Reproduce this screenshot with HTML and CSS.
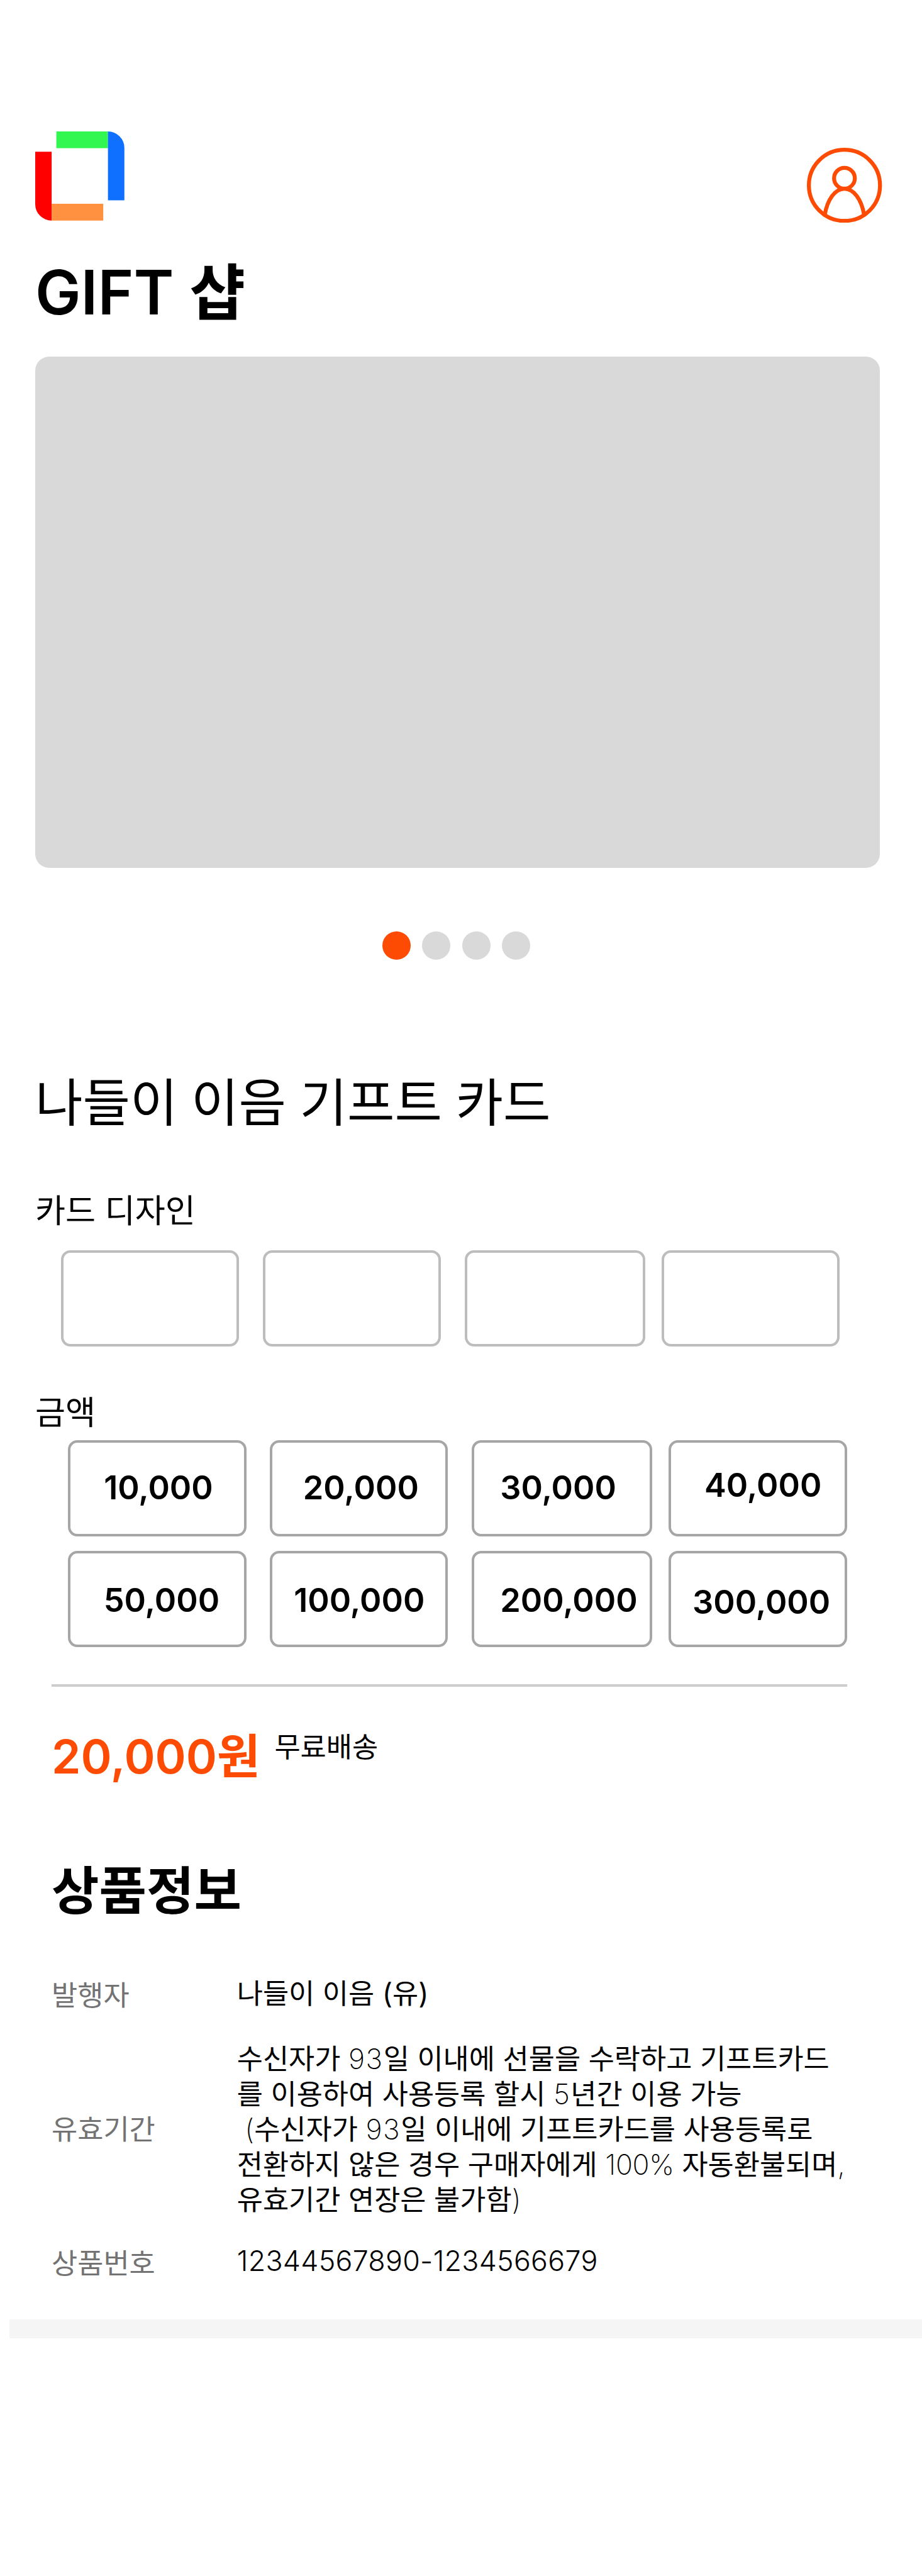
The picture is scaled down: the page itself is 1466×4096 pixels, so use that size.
FILE: index.html
```html
<!DOCTYPE html>
<html lang="ko">
<head>
<meta charset="utf-8">
<title>GIFT 샵</title>
<link rel="stylesheet" href="styles.css">
</head>
<body>
<main class="page">
  <header class="topbar">
    <svg class="logo" viewBox="0 0 152 152" aria-hidden="true">
      <rect x="36" y="0" width="88" height="28.5" fill="#31f750"/>
      <path d="M124 0a28 28 0 0 1 28 28v89.5h-28z" fill="#0f6fff"/>
      <path d="M0 34.5h28V152A28 28 0 0 1 0 124z" fill="#ff0000"/>
      <rect x="28" y="123.3" width="88" height="28.7" fill="#ff9141"/>
    </svg>
    <svg class="profile" viewBox="0 0 128 128" fill="none" stroke="#fe4b03" stroke-width="6.7" aria-hidden="true">
      <circle cx="64" cy="64" r="60.65"/>
      <circle cx="64" cy="52" r="17.7"/>
      <path d="M30.5 114C35 88 48 69.8 64 69.8S93 88 97.5 114"/>
    </svg>
  </header>
  <h1 class="title">GIFT 샵</h1>
  <div class="banner"></div>
  <div class="dots"><i class="dot active"></i><i class="dot"></i><i class="dot"></i><i class="dot"></i></div>
  <h2 class="product">나들이 이음 기프트 카드</h2>
  <h3 class="label label-design">카드 디자인</h3>
  <div class="grid designs">
    <div class="card"></div><div class="card"></div><div class="card"></div><div class="card"></div>
  </div>
  <h3 class="label label-amount">금액</h3>
  <div class="grid amounts">
    <div class="card a1">10,000</div><div class="card a2">20,000</div><div class="card a3">30,000</div><div class="card a4">40,000</div>
    <div class="card b1">50,000</div><div class="card b2">100,000</div><div class="card b3">200,000</div><div class="card b4">300,000</div>
  </div>
  <hr class="rule">
  <div class="price-row"><strong class="price">20,000원</strong><span class="shipping">무료배송</span></div>
  <h2 class="info-title">상품정보</h2>
  <dl class="info">
    <div class="info-row"><dt>발행자</dt><dd>나들이 이음 (유)</dd></div>
    <div class="info-row period"><dt>유효기간</dt><dd>
      <p>수신자가 <span class="days">93</span>일 이내에 선물을 수락하고 기프트카드</p>
      <p>를 이용하여 사용등록 할시 <span class="days">5</span>년간 이용 가능</p>
      <p class="indent"><span class="thin">(</span>수신자가 <span class="days">93</span>일 이내에 기프트카드를 사용등록로</p>
      <p>전환하지 않은 경우 구매자에게 <span class="percent">100%</span> 자동환불되며<span class="thin">,</span></p>
      <p>유효기간 연장은 불가함<span class="thin">)</span></p>
    </dd></div>
    <div class="info-row"><dt>상품번호</dt><dd class="number">12344567890-1234566679</dd></div>
  </dl>
  <div class="band"></div>
</main>
</body>
</html>
```
FILE: styles.css
```css
/* 1rem = 10 design units on a 393-unit wide screen */
html { font-size: 37.303px; }
* { box-sizing: border-box; margin: 0; padding: 0; }
body {
  background: #fff;
  color: #000;
  font-family: Inter, "Noto Sans CJK KR", sans-serif;
}
.page { width: 1466px; height: 4096px; overflow: hidden; padding-top: 5.6rem; }
h1, h2, h3, strong { font-weight: 400; white-space: nowrap; }

.topbar { display: flex; justify-content: space-between; height: 3.8rem; padding: 0 1.7rem 0 1.5rem; }
.logo { width: 3.8rem; height: 3.8rem; }
.profile { width: 3.2rem; height: 3.2rem; margin-top: .7rem; }

.title { margin: 1.5rem 0 0 1.5rem; font-size: 2.6rem; line-height: 3.1rem; font-weight: 600; }
.banner { margin: 1.2rem 0 0 1.5rem; width: 36rem; height: 21.8rem; border-radius: .6rem; background: #d9d9d9; }

.dots { display: flex; gap: .5rem; margin: 2.7rem 0 0 16.3rem; }
.dot { width: 1.2rem; height: 1.2rem; border-radius: 50%; background: #d9d9d9; }
.dot.active { background: #fe4b03; }

.product { margin: 4.77rem 0 0 1.5rem; font-size: 2.2rem; line-height: 2.7rem; word-spacing: -.041rem; }
.label { margin-left: 1.5rem; font-size: 1.4rem; line-height: 1.7rem; }
.label-design { margin-top: 2.4rem; }
.label-amount { margin-top: 1.97rem; }

.grid { display: grid; grid-template-columns: 7.6rem 7.6rem 7.7rem 7.6rem; column-gap: 1rem; grid-auto-rows: 4.1rem; }
.card { border: 4px solid #bdbdbd; border-radius: .4rem; }
.card:nth-child(4n) { margin: 0 .3rem 0 -.3rem; width: 7.6rem; }
.designs { margin: .83rem 0 0 2.6rem; }
.amounts { margin: .33rem 0 0 2.9rem; row-gap: .6rem; }
.amounts .card { border-color: #a6a6a6; padding-top: 1.055rem; font-size: 1.4rem; line-height: 1.7rem; font-weight: 600; }
.amounts .a1 { padding-left: 1.42rem; }
.amounts .a2 { padding-left: 1.31rem; }
.amounts .a3 { padding-left: 1.11rem; }
.amounts .a4 { padding: .955rem 0 0 1.42rem; }
.amounts .b1 { padding: 1.155rem 0 0 1.41rem; }
.amounts .b2 { padding: 1.155rem 0 0 .92rem; }
.amounts .b3 { padding: 1.155rem 0 0 1.11rem; }
.amounts .b4 { padding: 1.255rem 0 0 .91rem; }

.rule { margin: 1.6rem 0 0 2.2rem; width: 33.9rem; height: .1rem; border: 0; background: #cdcdcd; }

.price-row { display: flex; align-items: flex-start; margin: 1.8rem 0 0 2.2rem; height: 2.4rem; }
.price { width: 9.5rem; color: #fe4b03; font-size: 2rem; line-height: 2.4rem; font-weight: 600; }
.shipping { margin-top: .05rem; font-size: 1.2rem; line-height: 1.5rem; }
.info-title { margin: 3.185rem 0 0 2.2rem; font-size: 2.2rem; line-height: 2.7rem; font-weight: 600; }

.info { display: flex; flex-direction: column; margin: 2.267rem 0 0 2.2rem; font-size: 1.2rem; line-height: 1.5rem; }
.info-row { display: flex; }
.info dt { width: 7.9rem; padding-top: .1rem; color: #737373; }
.info dd { white-space: nowrap; }
.indent { padding-left: .338rem; }
.thin { font-weight: 250; }
.days { font-weight: 250; letter-spacing: .04rem; }
.percent { font-weight: 250; letter-spacing: -.01rem; }
.info .number { font-weight: 340; letter-spacing: .0075rem; }
.period { margin: 1.2rem 0 1.1rem; }
.period dt { padding-top: 3rem; }

.band { margin: 1.628rem 0 0 .4rem; height: .8rem; background: #f5f5f5; }
```
